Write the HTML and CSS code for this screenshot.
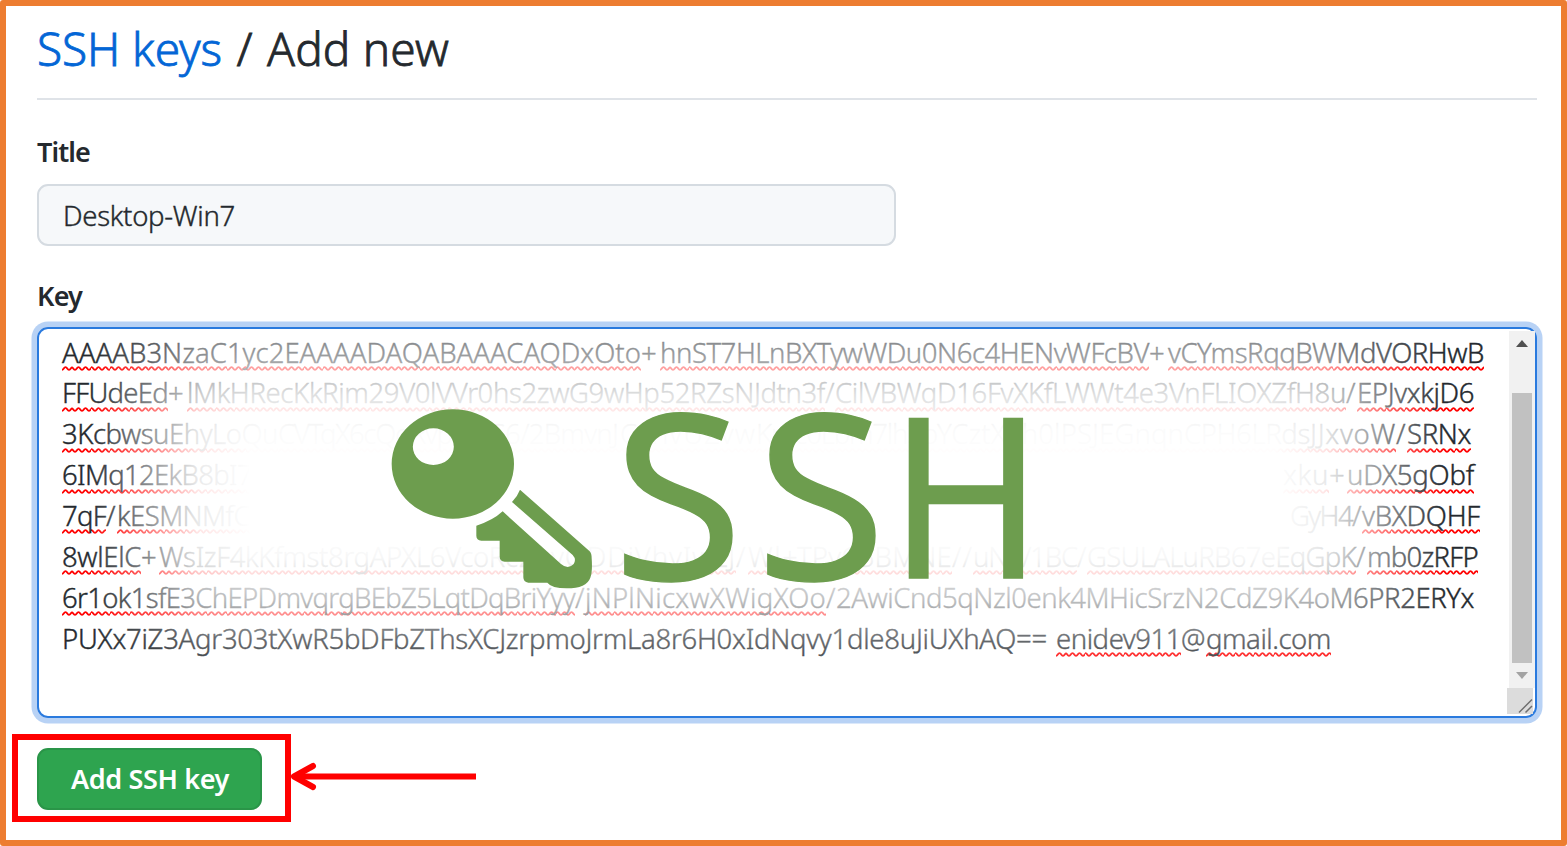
FILE: index.html
```
<!DOCTYPE html>
<html lang="en">
<head>
<meta charset="utf-8">
<title>SSH keys / Add new</title>
<link rel="stylesheet" href="styles.css">
</head>
<body>
<main class="page">
  <h1 class="heading"><a class="link" data-w="185">SSH keys</a><span class="slash">/</span><span data-w="182">Add new</span></h1>

  <label class="label"><span data-w="53">Title</span></label>
  <div class="input"><span data-w="172">Desktop-Win7</span></div>

  <label class="label label-key"><span data-w="45">Key</span></label>
  <div class="textarea">
    <div class="lines">
      <div class="line"><u data-w="579">AAAAB3NzaC1yc2EAAAADAQABAAACAQDxOto</u><span data-w="19">+</span><u data-w="489">hnST7HLnBXTywWDu0N6c4HENvWFcBV</u><span data-w="19">+</span><u data-w="316">vCYmsRqqBWMdVORHwB</u></div>
      <div class="line"><u data-w="106">FFUdeEd</u><span data-w="19">+</span><u data-w="638">lMkHRecKkRjm29V0lVVr0hs2zwG9wHp52RZsNJdtn3f</u><span data-w="10">/</span><u data-w="511">CilVBWqD16FvXKfLWWt4e3VnFLIOXZfH8u</u><span data-w="11">/</span><u data-w="117">EPJvxkjD6</u></div>
      <div class="line"><u data-w="216">3KcbwsuEhyLoQu</u><u data-w="117">CVTqX6cQ</u><u data-w="110">oRvpWsG</u><u data-w="107">6/2Bmvn</u><u data-w="144">JCvhvUZvw</u><u data-w="181">Kmc0Lbm7lh3b</u><u data-w="247">YCztX7h0lPSJEGnqn</u><u data-w="126">CPH6LRds</u><u data-w="86">JJxvoW</u><span data-w="11">/</span><u data-w="64">SRNx</u></div>
      <div class="line split"><span><u data-w="190">6IMq12EkB8bI7</u></span><span><u data-w="46">xku</u><span data-w="18">+</span><u data-w="127">uDX5gObf</u></span></div>
      <div class="line split wide"><span><u data-w="44">7qF</u><span data-w="11">/</span><u data-w="133">kESMNMfC</u></span><span><span data-w="62">GyH4</span><span data-w="10">/</span><u data-w="118">vBXDQHF</u></span></div>
      <div class="line"><u data-w="79">8wlElC</u><span data-w="18">+</span><u data-w="346">WsIzF4kKfmst8rgAPXL6VcoR</u><u data-w="231">cZevODDiVhvIwLJ</u><span data-w="12">/</span><u data-w="34">Wl</u><span data-w="15">+</span><u data-w="155">TPvC5BMNE</u><span data-w="21">//</span><u data-w="104">uNV/1BC</u><span data-w="10">/</span><u data-w="269">GSULALuRB67eEqGpK</u><span data-w="11">/</span><u data-w="111">mb0zRFP</u></div>
      <div class="line"><u data-w="513">6r1ok1sfE3ChEPDmvqrgBEbZ5LqtDqBriYyy</u><span data-w="10">/</span><u data-w="241">jNPlNicxwXWigXOo</u><span data-w="10">/</span><span data-w="638">2AwiCnd5qNzl0enk4MHicSrzN2CdZ9K4oM6PR2ERYx</span></div>
      <div class="line"><span data-w="985">PUXx7iZ3Agr303tXwR5bDFbZThsXCJzrpmoJrmLa8r6H0xIdNqvy1dle8uJiUXhAQ==</span><span class="gap"></span><u data-w="125">enidev911</u><span data-w="25">@</span><u data-w="125">gmail.com</u></div>
    </div>
    <div class="veil"></div>
    <svg class="logo" viewBox="0 0 2000 615">
      <path fill-rule="evenodd" d="M65 207a183.5 164 0 1 0 367 0a183.5 164 0 1 0-367 0ZM128.500 155a61.500 55 0 1 0 123 0a61.500 55 0 1 0-123 0Z"/>
      <path d="M450 284L659 469Q665 475 665 490Q668 530 661 548Q650 580 590 580Q545 580 532 563L475 563Q460 561 460 547L460 500L404 500Q389 498 389 485L389 437L334 437Q319 435 319 422L319 392Q368 377 398 349L573 507Q594 525 611 507Q620 493 608 480L426 321Q442 305 450 284Z"/>
      <text class="logo-text" transform="translate(728 555) scale(1.06 1.025)">S</text>
      <text class="logo-text" transform="translate(1157 555) scale(1.06 1.025)">S</text>
      <text class="logo-text" transform="translate(1558 548) scale(.925 .993)">H</text>
    </svg>
    <div class="scrollbar">
      <svg class="arrow" viewBox="0 0 12 7"><path fill="#505050" d="M6 0L12 7H0Z"/></svg>
      <div class="thumb"></div>
      <svg class="arrow" viewBox="0 0 12 7"><path fill="#a3a3a3" d="M6 7L12 0H0Z"/></svg>
    </div>
    <svg class="grip" viewBox="0 0 26 26"><path d="M12 24.500L25 11.500M18.500 24.500L25 18"/></svg>
  </div>

  <div class="actions">
    <button class="submit" type="button"><span data-w="158">Add SSH key</span></button>
    <div class="callout"></div>
    <svg class="pointer" viewBox="0 0 186 30"><path d="M186 15.500H6"/><path class="head" d="M23 5L4 15.500L23 26"/></svg>
  </div>
</main>
<script src="fit.js"></script>
</body>
</html>
```
FILE: styles.css
```
* { box-sizing: border-box; }

body {
  margin: 0;
  background: #fff;
  color: #24292e;
  font-family: "Noto Sans", "Open Sans", sans-serif;
  font-size: 28px;
}

[data-w] {
  display: inline-block;
  white-space: pre;
}

.page {
  display: flex;
  flex-direction: column;
  width: 1567px;
  height: 846px;
  padding: 12px 24px 0 31px;
  border: 6px solid #ed7d31;
  border-radius: 3px;
  overflow: hidden;
}

.heading {
  display: flex;
  height: 82px;
  margin: 0;
  border-bottom: 2px solid #dfe3e8;
  font-size: 46px;
  font-weight: 300;
  line-height: 61px;
  -webkit-text-stroke: .8px;
}

.link { color: #0366d6; }

.slash {
  width: 45px;
  text-align: center;
}

.label {
  height: 84px;
  padding-top: 33px;
  font-weight: 600;
  font-size: 27px;
  line-height: 38px;
}

.label-key {
  height: 81px;
  padding-top: 31px;
}

.input {
  width: 859px;
  height: 62px;
  padding-left: 24px;
  background: #f6f8fa;
  border: 2px solid #d5dbe1;
  border-radius: 11px;
  font-size: 27.5px;
  font-weight: 300;
  line-height: 59px;
  -webkit-text-stroke: .4px;
}

.textarea {
  position: relative;
  display: flex;
  width: 1500px;
  height: 391px;
  padding: 3.500px 0 0 23px;
  border: 2px solid #2a7ade;
  border-radius: 11px;
  box-shadow: 0 0 0 5.500px #b8d2f5;
}

.lines {
  font-size: 27.5px;
  font-weight: 300;
  line-height: 40.860px;
  -webkit-text-stroke: .4px;
}

.line {
  display: flex;
  height: 40.860px;
}

.line u {
  text-decoration: none;
  background: url("data:image/svg+xml,%3Csvg xmlns='http://www.w3.org/2000/svg' width='6.67' height='5' viewBox='0 0 6.67 5'%3E%3Cpath d='M-1.67 2.500Q0 5.200 1.670 2.500T5 2.500T8.340 2.500' fill='none' stroke='red' stroke-width='1.800'/%3E%3C/svg%3E") repeat-x 0 33.5px;
}

.split {
  justify-content: space-between;
  width: 1412px;
}

.wide { width: 1418px; }

.gap { width: 9px; }

.veil {
  position: absolute;
  inset: 1px 27px 3px 1px;
  background: #fff;
  -webkit-mask-image:
    linear-gradient(90deg, transparent 48px, rgba(0, 0, 0, .5) 112px, rgba(0, 0, 0, .9) 158px, #000 210px, #000 1235px, rgba(0, 0, 0, .9) 1285px, rgba(0, 0, 0, .5) 1340px, transparent 1405px),
    linear-gradient(rgba(0, 0, 0, .45) 10px, rgba(0, 0, 0, .55) 28px, rgba(0, 0, 0, .85) 65px, rgba(0, 0, 0, .98) 100px, #000 135px, #000 200px, rgba(0, 0, 0, .96) 228px, rgba(0, 0, 0, .7) 270px, rgba(0, 0, 0, .3) 310px, transparent 350px);
  -webkit-mask-composite: source-in;
  mask-composite: intersect;
}

.logo {
  position: absolute;
  left: 331px;
  top: 66px;
  width: 666.670px;
  height: 205px;
  fill: #6d9d4e;
}

.logo-text {
  font-size: 672px;
  font-weight: 400;
  stroke: #6d9d4e;
  stroke-width: 4;
}

.scrollbar {
  display: flex;
  flex-direction: column;
  align-items: center;
  justify-content: space-between;
  position: absolute;
  right: 0;
  top: 2px;
  width: 26px;
  height: 357px;
  padding: 9px 0;
  background: #f1f1f1;
}

.arrow {
  width: 12px;
  height: 7px;
}

.thumb {
  width: 20px;
  height: 270px;
  margin-top: 37px;
  background: #c1c1c1;
}

.grip {
  position: absolute;
  right: 2px;
  bottom: 2px;
  width: 26px;
  height: 26px;
  background: #dcdcdc;
  fill: none;
  stroke: #6e6e6e;
  stroke-width: 1.500;
}

.actions {
  position: relative;
  padding-top: 30px;
}

.submit {
  width: 225px;
  height: 62px;
  padding: 0 0 0 1px;
  background: #2ea44f;
  border: 2px solid #2a9548;
  border-radius: 11px;
  color: #fff;
  font: 600 27px/56px "Noto Sans", "Open Sans", sans-serif;
}

.callout {
  position: absolute;
  left: -25px;
  top: 16px;
  width: 279px;
  height: 88px;
  border: 6px solid #f00;
}

.pointer {
  position: absolute;
  left: 253px;
  top: 43px;
  width: 186px;
  height: 30px;
  fill: none;
  stroke: #f00;
  stroke-width: 6;
}

.head {
  stroke-linecap: round;
  stroke-linejoin: round;
}
```
FILE: fit.js
```
// Tracks each run of text so that it fills its declared width.
document.querySelectorAll("[data-w]").forEach((el) => {
  const target = parseFloat(el.dataset.w);
  const natural = el.getBoundingClientRect().width;
  el.style.letterSpacing = (target - natural) / el.textContent.length + "px";
  el.style.width = target + "px";
});
```
